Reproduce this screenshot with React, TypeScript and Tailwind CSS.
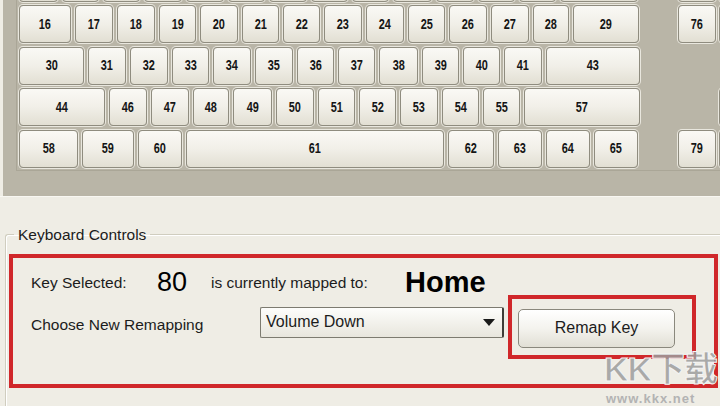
import React from 'react'

type Row = { starts: number[]; end: number; labels: string[] }

const GAP = 4

const mainRows: Row[] = [
  { starts: [19, 62, 103, 144, 186, 228, 269, 311, 352, 393, 436, 478, 519, 560], end: 638, labels: [] },
  {
    starts: [19, 75, 117, 159, 200, 242, 283, 324, 366, 408, 449, 491, 533, 573],
    end: 639,
    labels: ['16', '17', '18', '19', '20', '21', '22', '23', '24', '25', '26', '27', '28', '29'],
  },
  {
    starts: [19, 88, 130, 172, 213, 255, 297, 338, 379, 422, 463, 504, 546],
    end: 640,
    labels: ['30', '31', '32', '33', '34', '35', '36', '37', '38', '39', '40', '41', '43'],
  },
  {
    starts: [19, 109, 151, 193, 233, 276, 318, 359, 400, 442, 483, 524],
    end: 640,
    labels: ['44', '46', '47', '48', '49', '50', '51', '52', '53', '54', '55', '57'],
  },
  {
    starts: [19, 82, 138, 186, 448, 498, 546, 594],
    end: 638,
    labels: ['58', '59', '60', '61', '62', '63', '64', '65'],
  },
]

// right-hand block, only partly on screen
const sideRows: (string | null)[][] = [
  ['', ''],
  ['76', ''],
  [],
  [null, ''],
  ['79', ''],
]

const Key: React.FC<{ label?: string; width: number }> = ({ label, width }) => (
  <div
    style={{ width }}
    className="h-full shrink-0 rounded-[4px] border border-[#8f8c7f] bg-gradient-to-b from-[#faf9f5] via-[#f1efe8] to-[#e2dfd3] shadow-[0_0_0_1px_#e9e7de] flex items-center justify-center"
  >
    <span className="inline-block scale-x-[0.78] text-[14px] font-bold text-[#151515] font-['Liberation_Sans',sans-serif]">
      {label}
    </span>
  </div>
)

const MainRow: React.FC<{ row: Row }> = ({ row }) => (
  <div className="flex h-[38px] gap-[4px]">
    {row.starts.map((s, i) => {
      const next = i < row.starts.length - 1 ? row.starts[i + 1] - GAP : row.end
      return <Key key={s} label={row.labels[i]} width={next - s} />
    })}
  </div>
)

const Keyboard: React.FC = () => (
  <div className="ml-[3px] bg-[#b9b5a7] pb-[25px]">
    <div className="ml-[13px] -mt-[36.5px] flex border-l border-b border-[#aaa697] pl-[2px] pb-[2px]">
      <div className="flex w-[622px] shrink-0 flex-col gap-[3.5px]">
        {mainRows.map((r, i) => (
          <MainRow key={i} row={r} />
        ))}
      </div>
      <div className="ml-[37px] flex shrink-0 flex-col gap-[3.5px]">
        {sideRows.map((r, i) => (
          <div key={i} className="flex h-[38px] gap-[3px]">
            {r.map((k, j) =>
              k === null ? (
                <div key={j} className="w-[38px] shrink-0" />
              ) : (
                <Key key={j} label={k} width={38} />
              ),
            )}
          </div>
        ))}
      </div>
    </div>
  </div>
)

const Controls: React.FC = () => (
  <fieldset className="ml-[5px] mt-[29px] border-l border-t border-[#d0cdbf] shadow-[inset_1px_1px_0_#ffffff] rounded-tl-[3px] pb-[20px]">
    <legend className="ml-[8px] px-[4px] text-[15.5px] leading-[18px] text-[#1c1c1c]">Keyboard Controls</legend>
    <div className="ml-[3px] mt-[10px] h-[134px] w-[709px] border-[4px] border-[#d0272a] pl-[18px] pt-[13px]">
      <div className="flex h-[24px] items-center text-[15.5px] text-[#1c1c1c]">
        <span className="w-[126px] shrink-0">Key Selected:</span>
        <span className="w-[54px] shrink-0 text-[27px] leading-none font-medium text-black">80</span>
        <span className="w-[194px] shrink-0">is currently mapped to:</span>
        <span className="text-[29px] leading-none font-bold text-black">Home</span>
      </div>
      <div className="flex items-start text-[15.5px] text-[#1c1c1c]">
        <span className="mt-[20px] w-[229px] shrink-0 leading-[20px]">Choose New Remapping</span>
        <div className="mt-[12px] flex h-[31px] w-[244px] shrink-0 items-center justify-between rounded-[2px] border border-[#7d7b70] border-r-[2px] border-r-[#3e3d38] bg-gradient-to-b from-[#fdfdfb] to-[#e8e6dd] pl-[5px] pr-[7px] text-[16px]">
          <span>Volume Down</span>
          <svg width="12" height="7" viewBox="0 0 12 7">
            <path d="M0 0 H12 L6 7 Z" fill="#1a1a1a" />
          </svg>
        </div>
        <div className="ml-[4px] h-[64px] w-[188px] shrink-0 border-[4px] border-[#d0272a] pl-[6px] pt-[10px]">
          <button className="flex h-[39px] w-[157px] items-center justify-center rounded-[5px] border border-[#8a887d] bg-gradient-to-b from-[#ffffff] via-[#f4f3ee] to-[#e1dfd5] text-[16px] text-[#1c1c1c]">
            Remap Key
          </button>
        </div>
      </div>
    </div>
  </fieldset>
)

export default function App() {
  return (
    <div className="relative h-[406px] w-[720px] overflow-hidden bg-[#efede5] font-['Liberation_Sans',Arial,sans-serif]">
      <Keyboard />
      <div className="h-[1px] bg-[#f8f7f2]" />
      <Controls />
      {/* site watermark */}
      <div className="pointer-events-none absolute left-[604px] top-[352px] flex flex-col items-start">
        <span className="text-[34px] font-bold leading-none tracking-[-1px] text-[#9d9d9d]/85 font-['Liberation_Sans','Noto_Sans_CJK_SC',sans-serif] [-webkit-text-stroke:1px_#f4f4f4]">
          KK下载
        </span>
        <span className="mt-[6px] ml-[2px] text-[13px] font-bold leading-none tracking-[1px] text-[#b3b3b3]">
          www.kkx.net
        </span>
      </div>
    </div>
  )
}
